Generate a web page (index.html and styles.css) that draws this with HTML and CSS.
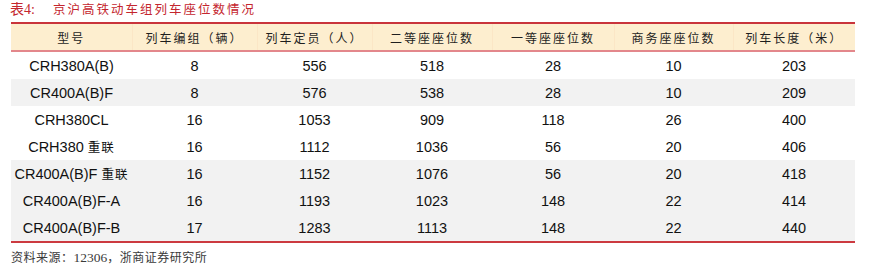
FILE: index.html
```html
<!DOCTYPE html>
<html lang="zh">
<head>
<meta charset="utf-8">
<link rel="stylesheet" href="styles.css">
</head>
<body>
<div class="page">
  <div class="title"><span class="tno">表4:</span><span class="ttext">京沪高铁动车组列车座位数情况</span></div>
  <table class="tbl">
    <colgroup>
      <col style="width:121px"><col style="width:125px"><col style="width:115px"><col style="width:120px"><col style="width:122px"><col style="width:119px"><col style="width:122px">
    </colgroup>
    <thead>
      <tr>
        <th>型号</th><th>列车编组（辆）</th><th>列车定员（人）</th><th>二等座座位数</th><th>一等座座位数</th><th>商务座座位数</th><th>列车长度（米）</th>
      </tr>
    </thead>
    <tbody>
      <tr><td>CRH380A(B)</td><td>8</td><td>556</td><td>518</td><td>28</td><td>10</td><td>203</td></tr>
      <tr class="g"><td>CR400A(B)F</td><td>8</td><td>576</td><td>538</td><td>28</td><td>10</td><td>209</td></tr>
      <tr><td>CRH380CL</td><td>16</td><td>1053</td><td>909</td><td>118</td><td>26</td><td>400</td></tr>
      <tr><td>CRH380 <span class="cn">重联</span></td><td>16</td><td>1112</td><td>1036</td><td>56</td><td>20</td><td>406</td></tr>
      <tr class="g"><td>CR400A(B)F <span class="cn">重联</span></td><td>16</td><td>1152</td><td>1076</td><td>56</td><td>20</td><td>418</td></tr>
      <tr class="g"><td>CR400A(B)F-A</td><td>16</td><td>1193</td><td>1023</td><td>148</td><td>22</td><td>414</td></tr>
      <tr class="g"><td>CR400A(B)F-B</td><td>17</td><td>1283</td><td>1113</td><td>148</td><td>22</td><td>440</td></tr>
    </tbody>
  </table>
  <div class="source">资料来源：<span class="num">12306</span>，浙商证券研究所</div>
</div>
</body>
</html>
```

FILE: styles.css
```css
html, body {
  margin: 0;
  padding: 0;
  background: #ffffff;
}
.page {
  padding: 0 0 0 11px;
  width: 844px;
}
.title {
  height: 18px;
  line-height: 18px;
  font-family: "Liberation Serif", "Noto Sans CJK SC", serif;
  font-size: 14px;
  color: #c4262e;
  white-space: nowrap;
  margin-left: -1px;
}
.title .tno {
  display: inline-block;
  width: 43px;
}
.title .ttext {
  font-family: "Noto Sans CJK SC", sans-serif;
  font-size: 12.5px;
  letter-spacing: 2px;
}
.tbl {
  margin-top: 4px;
  width: 844px;
  border-collapse: collapse;
  table-layout: fixed;
}
.tbl th {
  height: 26px;
  padding: 0;
  background: #fdeecf;
  border-top: 2px solid #c9343b;
  border-bottom: 2px solid #e3878b;
  border-left: 1px solid #fbe6c6;
  font-family: "Noto Sans CJK SC", sans-serif;
  font-weight: normal;
  font-size: 12px;
  letter-spacing: 2px;
  color: #1e1e1e;
  text-align: center;
}
.tbl th:first-child { border-left: none; }
.tbl td {
  height: 27px;
  padding: 0;
  text-align: center;
  font-family: "Liberation Sans", Arial, sans-serif;
  font-size: 14.5px;
  color: #111111;
  white-space: nowrap;
}
.tbl tr.g td {
  background: #f2f2f2;
}
.tbl tbody tr:last-child td {
  border-bottom: 2px solid #cc3a40;
}
.cn {
  font-family: "Noto Sans CJK SC", sans-serif;
  font-size: 12.5px;
  letter-spacing: 1px;
}
.source {
  margin-top: 6px;
  height: 16px;
  line-height: 16px;
  font-family: "Noto Sans CJK SC", sans-serif;
  font-size: 12px;
  color: #3a3a3a;
  letter-spacing: 0.5px;
  white-space: nowrap;
}
.source .num {
  font-family: "Liberation Serif", serif;
  font-size: 13.5px;
  letter-spacing: 0;
}
```
